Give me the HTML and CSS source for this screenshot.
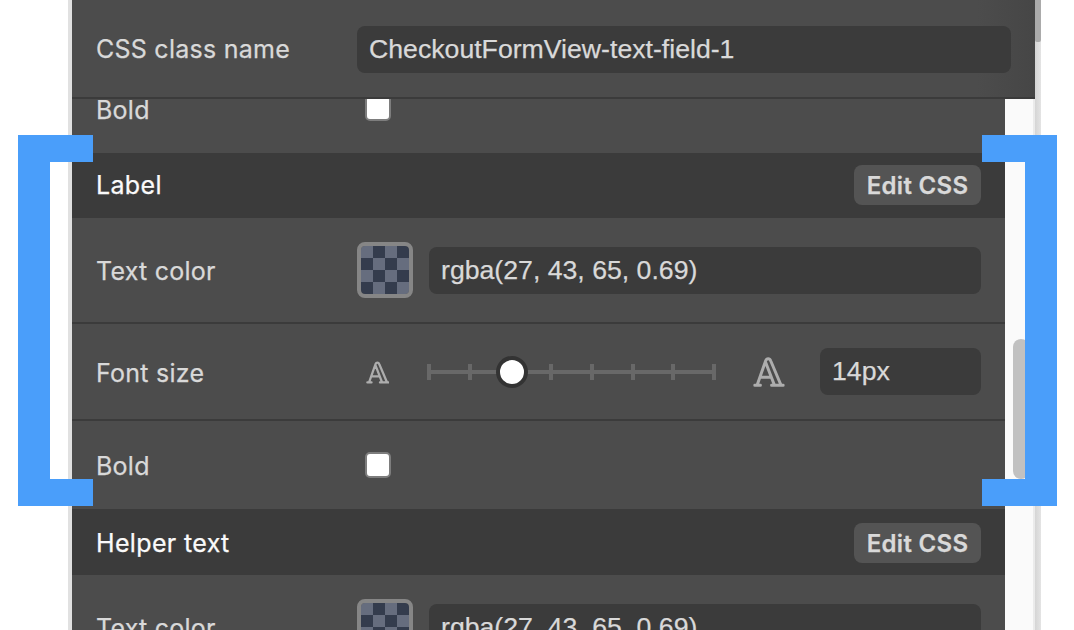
FILE: index.html
```html
<!DOCTYPE html>
<html lang="en">
<head>
<meta charset="utf-8">
<title>Style editor</title>
<link rel="stylesheet" href="styles.css">
</head>
<body>
<svg class="defs" width="0" height="0">
  <symbol id="letter" viewBox="0 0 32 30">
    <path d="M1.8 28.3H7.4M18.6 28.3H30.2M4.2 28L12.6 4Q13.5 1.7 15.2 1.7Q16.9 1.7 17.8 4L28 28M12.7 5.5L21.4 28M8.2 20.2H18" fill="none" stroke="#adadad" stroke-width="3" stroke-linecap="round" stroke-linejoin="round"/>
  </symbol>
</svg>
<div class="window">
  <main class="panel">
    <header class="row row-class">
      <label class="name">CSS class name</label>
      <div class="field">CheckoutFormView-text-field-1</div>
    </header>
    <div class="body">
      <div class="rows">
        <section class="row row-bold clipped">
          <label class="name">Bold</label>
          <span class="check"></span>
        </section>
        <section class="head">
          <h2 class="title">Label</h2>
          <button class="edit">Edit CSS</button>
        </section>
        <section class="row row-color">
          <label class="name">Text color</label>
          <span class="swatch"></span>
          <div class="field">rgba(27, 43, 65, 0.69)</div>
        </section>
        <section class="row row-size">
          <label class="name">Font size</label>
          <svg class="small-a"><use href="#letter"/></svg>
          <div class="slider">
            <i></i><i></i><i></i><i></i><i></i><i></i><i></i><i></i>
            <span class="thumb"></span>
          </div>
          <svg class="large-a"><use href="#letter"/></svg>
          <div class="field field-size">14px</div>
        </section>
        <section class="row row-bold">
          <label class="name">Bold</label>
          <span class="check"></span>
        </section>
        <section class="head head-helper">
          <h2 class="title">Helper text</h2>
          <button class="edit">Edit CSS</button>
        </section>
        <section class="row row-color">
          <label class="name">Text color</label>
          <span class="swatch"></span>
          <div class="field">rgba(27, 43, 65, 0.69)</div>
        </section>
      </div>
      <div class="track"><div class="bar"></div></div>
    </div>
  </main>
  <aside class="outer-track"><div class="outer-bar"></div></aside>
</div>
<div class="bracket bracket-left"></div>
<div class="bracket bracket-right"></div>
</body>
</html>
```
FILE: styles.css
```css
* { box-sizing: border-box; }
body {
  margin: 0;
  width: 1074px;
  height: 630px;
  overflow: hidden;
  position: relative;
  background: #fff;
  font-family: Inter, "Liberation Sans", sans-serif;
}
.defs { display: block; width: 0; height: 0; }
.window {
  display: flex;
  width: 973px;
  height: 630px;
  margin-left: 68px;
  border-left: 4px solid #e1e1e1;
}
.panel { width: 963px; display: flex; flex-direction: column; }
.row { display: flex; align-items: center; padding-left: 24px; background: #4c4c4c; }
.row-class {
  flex: none;
  height: 99px;
  padding-right: 24px;
  border-bottom: 2px solid #3b3b3b;
  padding-top: 2px;
  background: linear-gradient(90deg, #4c4c4c 94%, #464646);
}
.name {
  flex: none;
  width: 261px;
  padding-top: 2px;
  font-size: 25px;
  line-height: 30px;
  letter-spacing: 0.25px;
  color: #d9d9d9;
  -webkit-text-stroke: 0.25px #d9d9d9;
  white-space: nowrap;
}
.row-class .name { padding: 0 0 2px; }
.field {
  flex: 1;
  height: 47px;
  padding-left: 12px;
  border-radius: 8px;
  background: #3b3b3b;
  color: #d9d9d9;
  font: 26.67px/47px "Liberation Sans", Arial, sans-serif;
  -webkit-text-stroke: 0.25px #d9d9d9;
  white-space: nowrap;
}
.body { flex: 1; min-height: 0; display: flex; }
.rows { width: 933px; overflow: hidden; }
.row-bold { height: 88px; }
.clipped { height: 89px; margin-top: -35px; }
.check {
  width: 26px;
  height: 26px;
  margin: -1px 0 0 8px;
  border: 2px solid #7d7d7d;
  border-radius: 5px;
  background: #fff;
}
.head {
  height: 65px;
  padding: 0 24px 2px 24px;
  display: flex;
  align-items: center;
  justify-content: space-between;
  background: #3b3b3b;
}
.head-helper { height: 66px; padding: 1px 24px 0 24px; }
.title {
  margin: 0;
  font-size: 25px;
  line-height: 30px;
  font-weight: 400;
  letter-spacing: 0.35px;
  color: #fafafa;
  -webkit-text-stroke: 0.25px #fafafa;
}
.edit {
  width: 127px;
  height: 40px;
  padding: 0;
  border: 0;
  border-radius: 8px;
  background: #545454;
  color: #d9d9d9;
  font: 600 24px/42px Inter, sans-serif;
  letter-spacing: 0.3px;
  -webkit-text-stroke: 0.25px #d9d9d9;
  white-space: nowrap;
}
.row-color { height: 106px; padding-right: 24px; border-bottom: 2px solid #3b3b3b; }
.swatch {
  flex: none;
  width: 56px;
  height: 56px;
  margin-right: 16px;
  border: 4px solid #868686;
  border-radius: 8px;
  background: conic-gradient(#343c4d 25%, #666d7e 0 50%, #343c4d 0 75%, #666d7e 0) padding-box 0 0 / 24px 24px;
}
.row-size { height: 97px; padding-right: 24px; border-bottom: 2px solid #3b3b3b; }
.small-a { width: 24px; height: 23px; margin: 1px 38px 0 8.5px; }
.large-a { width: 32px; height: 30px; margin: 1px 35px 0 37px; }
.slider {
  position: relative;
  width: 289px;
  height: 16px;
  display: flex;
  justify-content: space-between;
  background: linear-gradient(#686868, #686868) center / 100% 4px no-repeat;
}
.slider i { width: 4px; background: #686868; }
.thumb {
  position: absolute;
  left: 69px;
  top: -8px;
  width: 32px;
  height: 32px;
  border: 4px solid #333;
  border-radius: 50%;
  background: #fff;
}
.field-size { flex: none; width: 161px; margin-left: auto; }
.track {
  width: 30px;
  padding: 240px 0 0 8px;
  background: #fafafa;
  border-right: 2px solid #ebebeb;
}
.bar { width: 16px; height: 140px; border-radius: 8px; background: #c1c1c1; }
.outer-track { width: 6px; background: linear-gradient(90deg, #d5d5d5, #e4e4e4); }
.outer-bar { height: 42px; background: #ababab; border-radius: 0 0 2px 2px; }
.bracket {
  position: absolute;
  top: 134.5px;
  width: 75px;
  height: 371px;
  background:
    linear-gradient(#4a9efa, #4a9efa) top / 100% 27px no-repeat,
    linear-gradient(#4a9efa, #4a9efa) bottom / 100% 27px no-repeat,
    linear-gradient(#4a9efa, #4a9efa) var(--side) / 32px 100% no-repeat;
}
.bracket-left { left: 18px; --side: left; }
.bracket-right { left: 982px; --side: right; }
```
